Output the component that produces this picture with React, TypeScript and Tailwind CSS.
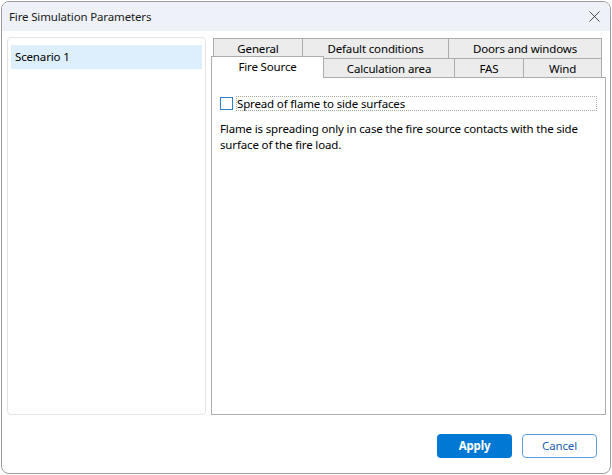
import { X } from "lucide-react";

const backRow = [
    { label: "General", w: "w-[90px]" },
    { label: "Default conditions", w: "w-[147px]" },
    { label: "Doors and windows", w: "w-[154px]" },
];

const frontRow = [
    { label: "Calculation area", w: "w-[132px]" },
    { label: "FAS", w: "w-[70px]" },
    { label: "Wind", w: "w-[79px]" },
];

export default function App() {
    return (
        <div className="w-[612px] h-[475px] bg-white pt-px pl-px" style={{ fontFamily: '"Noto Sans", sans-serif' }}>
            <div className="w-[610px] h-[473px] border border-[#9c9c9c] rounded-lg overflow-hidden flex flex-col bg-white text-[11.5px] tracking-[-0.15px] text-black">
                {/* title bar */}
                <div className="h-[29px] shrink-0 bg-[#eef2f8] flex items-center justify-between pl-[7px] pr-[6px]">
                    <span className="text-[#1a1a1a]">Fire Simulation Parameters</span>
                    <X size={19} strokeWidth={1} className="text-[#222]" />
                </div>

                {/* body */}
                <div className="flex gap-[5px] pl-[5px] pr-[3px] pt-[6px]">
                    <div className="w-[199px] h-[378px] border border-[#e3e3e3] rounded-[4px] p-[3px] pt-[7px]">
                        <div className="h-[24px] bg-[#ddeefc] flex items-center pl-[4px]">Scenario 1</div>
                    </div>

                    <div className="w-[395px] h-[378px] flex flex-col pt-px">
                        <div className="flex pl-[2px] h-[20px]">
                            {backRow.map((t) => (
                                <div
                                    key={t.label}
                                    className={`${t.w} h-[20px] border border-b-0 border-[#acacac] -ml-px first:ml-0 bg-[#ececec] flex items-center justify-center pt-px`}
                                >
                                    {t.label}
                                </div>
                            ))}
                        </div>
                        <div className="flex h-[20px] items-end relative z-10">
                            <div className="w-[113px] h-[22px] -mt-[2px] border border-b-0 border-[#acacac] bg-white flex items-start justify-center pt-[1px]">
                                Fire Source
                            </div>
                            {frontRow.map((t) => (
                                <div
                                    key={t.label}
                                    className={`${t.w} h-[20px] border border-[#acacac] -ml-px bg-[#ececec] flex items-center justify-center pt-px`}
                                >
                                    {t.label}
                                </div>
                            ))}
                        </div>
                        <div className="flex-1 border border-[#acacac] -mt-px px-[8px] pt-[18px]">
                            <div className="flex items-center gap-[3px]">
                                <span className="w-[13px] h-[13px] border border-[#2f7fd0] bg-white shrink-0" />
                                <span className="flex-1 border border-dotted border-[#a8a8a8] h-[15px] flex items-center leading-none">
                                    Spread of flame to side surfaces
                                </span>
                            </div>
                            <p className="mt-[10px] leading-[16px]">
                                Flame is spreading only in case the fire source contacts with the side surface of the fire load.
                            </p>
                        </div>
                    </div>
                </div>

                {/* footer */}
                <div className="flex justify-end gap-[10px] pr-[13px] pt-[19px]">
                    <button className="w-[75px] h-[24px] rounded-[4px] bg-[#0078d4] text-white font-bold">Apply</button>
                    <button className="w-[75px] h-[24px] rounded-[4px] border border-[#5b9fe3] text-[#1c5fb0] bg-white">Cancel</button>
                </div>
            </div>
        </div>
    );
}
